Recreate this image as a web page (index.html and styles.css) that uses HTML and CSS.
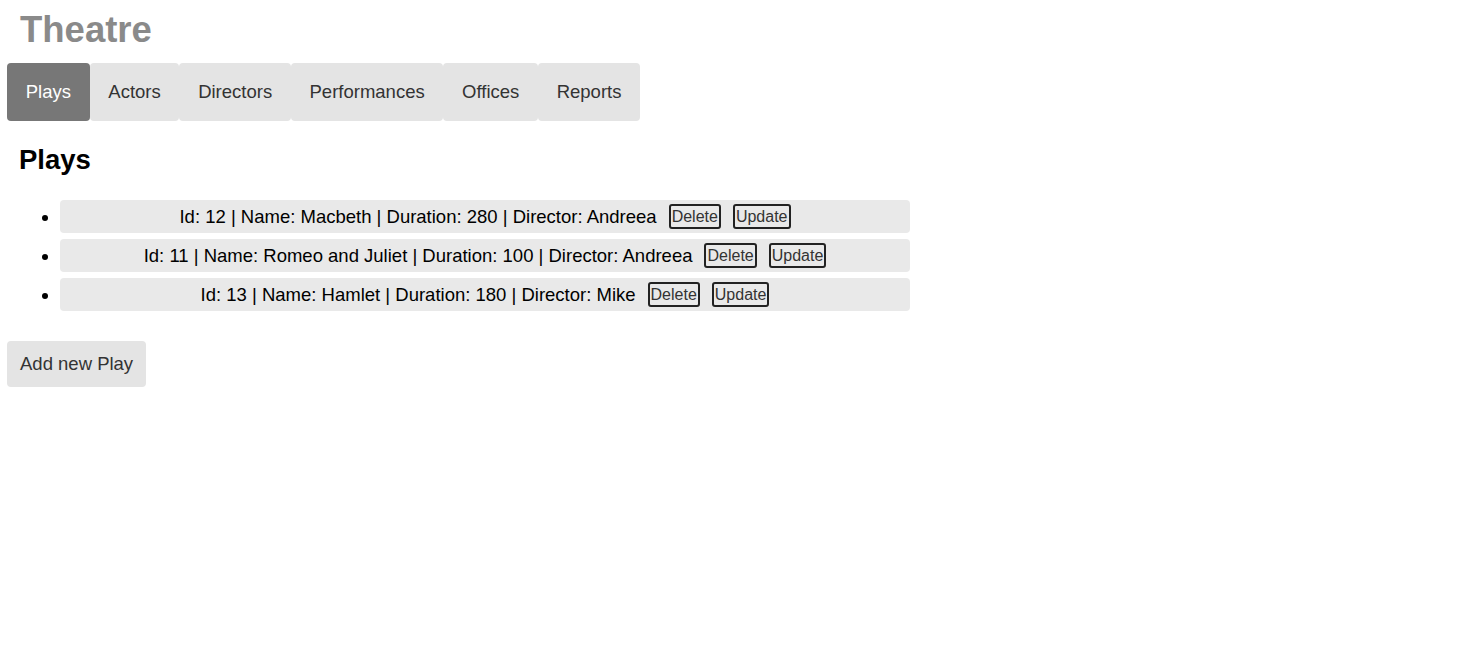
FILE: index.html
```html
<!DOCTYPE html>
<html>
<head>
<meta charset="utf-8">
<link rel="stylesheet" href="styles.css">
</head>
<body>
<div class="app">
  <h1 class="title">Theatre</h1>
  <nav class="tabs">
    <button class="tab active">Plays</button>
    <button class="tab">Actors</button>
    <button class="tab">Directors</button>
    <button class="tab">Performances</button>
    <button class="tab">Offices</button>
    <button class="tab">Reports</button>
  </nav>
  <section class="content">
    <h2 class="heading">Plays</h2>
    <ul class="list">
      <li class="item"><div class="row"><span>Id: 12 | Name: Macbeth | Duration: 280 | Director: Andreea</span><button class="small">Delete</button><button class="small">Update</button></div></li>
      <li class="item"><div class="row"><span>Id: 11 | Name: Romeo and Juliet | Duration: 100 | Director: Andreea</span><button class="small">Delete</button><button class="small">Update</button></div></li>
      <li class="item"><div class="row"><span>Id: 13 | Name: Hamlet | Duration: 180 | Director: Mike</span><button class="small">Delete</button><button class="small">Update</button></div></li>
    </ul>
  </section>
  <button class="add">Add new Play</button>
</div>
</body>
</html>
```
FILE: styles.css
```css
* { box-sizing: border-box; }
body {
  margin: 0;
  font-family: "Liberation Sans", Arial, sans-serif;
  background: #fff;
}
.app {
  padding: 0 7px;
}
.title {
  margin: 0;
  padding: 8px 0 0 13px;
  height: 63px;
  font-size: 36.5px;
  line-height: 44px;
  font-weight: bold;
  color: #8a8a8a;
}
.tabs {
  display: flex;
}
.tab {
  height: 58px;
  padding: 0 18.7px;
  border: none;
  border-radius: 4px;
  background: #e4e4e4;
  color: #333;
  font-family: inherit;
  font-size: 18.5px;
}
.tab.active {
  background: #777;
  color: #fff;
}
.content {
  padding-left: 12px;
}
.heading {
  margin: 23px 0 0;
  font-size: 27.5px;
  line-height: 32px;
  font-weight: bold;
  color: #000;
}
.list {
  margin: 24px 0 0;
  padding-left: 41px;
}
.item {
  margin-bottom: 6px;
  width: 850px;
  font-size: 18.5px;
  line-height: 33px;
}
.row {
  display: flex;
  justify-content: center;
  align-items: center;
  gap: 12px;
  height: 33px;
  background: #e9e9e9;
  border-radius: 4px;
}
.row span { color: #000; }
.small {
  font-family: inherit;
  font-size: 16px;
  line-height: 20px;
  height: 25px;
  padding: 0 1px;
  border: 2px solid #222;
  border-radius: 3px;
  background: #e9e9e9;
  color: #333;
}
.add {
  margin-top: 24px;
  height: 46px;
  padding: 0 13px;
  border: none;
  border-radius: 4px;
  background: #e4e4e4;
  color: #333;
  font-family: inherit;
  font-size: 18.5px;
}
```
